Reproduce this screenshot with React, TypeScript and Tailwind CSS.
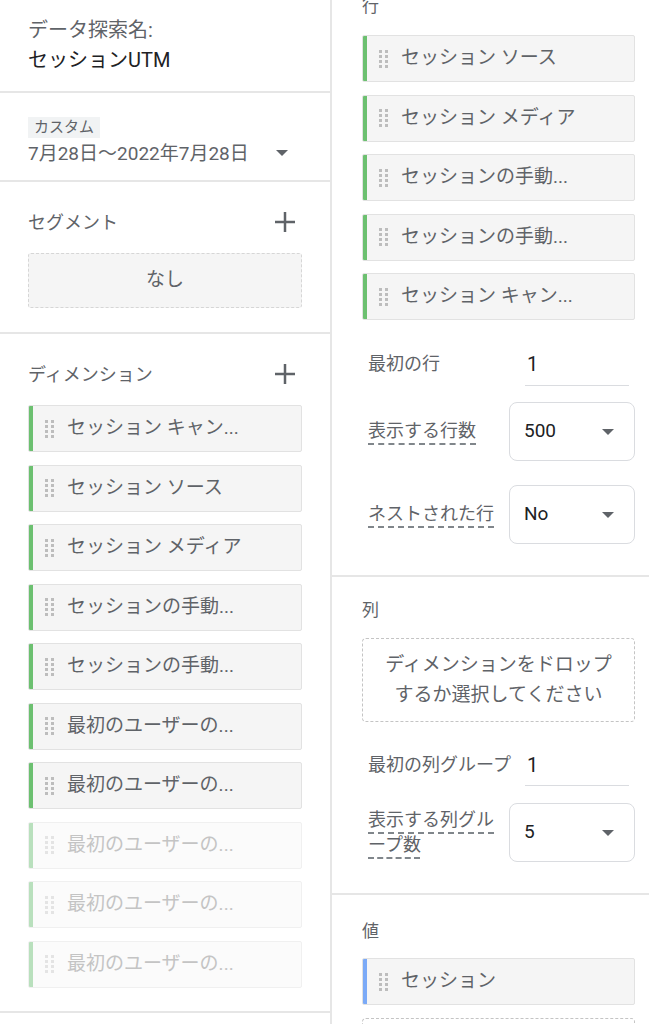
const font = { fontFamily: "Roboto, 'Noto Sans CJK JP', sans-serif" };

interface ChipProps {
  label: string;
  color?: "green" | "blue";
  faded?: boolean;
}

const Grip = ({ faded }: { faded?: boolean }) => (
  <div className="grid grid-cols-2 gap-x-[3px] gap-y-[2px] mr-[13px]">
    {Array.from({ length: 8 }).map((_, i) => (
      <span
        key={i}
        className={`w-[3px] h-[3px] ${faded ? "bg-[#e4e4e4]" : "bg-[#bdbdbd]"}`}
      />
    ))}
  </div>
);

const Chip = ({ label, color = "green", faded }: ChipProps) => {
  const bar = faded
    ? "bg-[#b9e0bd]"
    : color === "blue"
      ? "bg-[#7baaf7]"
      : "bg-[#6cc070]";
  return (
    <div
      className={`flex h-[47px] shrink-0 rounded-[2px] border overflow-hidden ${
        faded ? "border-[#f0f0f0] bg-[#fbfbfb]" : "border-[#e2e2e2] bg-[#f5f5f5]"
      }`}
    >
      <div className={`w-[4px] ${bar}`} />
      <div className="flex items-center pl-[12px]">
        <Grip faded={faded} />
        <span
          className={`text-[19px] whitespace-nowrap ${faded ? "text-[#c4c4c4]" : "text-[#5f6368]"}`}
        >
          {label}
        </span>
      </div>
    </div>
  );
};

const Plus = () => (
  <svg width="22" height="22" viewBox="0 0 22 22">
    <path d="M11 1v20M1 11h20" stroke="#5f6368" strokeWidth="2.5" />
  </svg>
);

const Caret = () => (
  <svg width="12" height="6" viewBox="0 0 12 6">
    <path d="M0 0h12L6 6z" fill="#5f6368" />
  </svg>
);

const Select = ({ value }: { value: string }) => (
  <div className="w-[126px] h-[59px] shrink-0 border border-[#dadce0] rounded-[8px] flex items-center justify-between pl-[14px] pr-[20px]">
    <span className="text-[19px] text-[#202124]">{value}</span>
    <Caret />
  </div>
);

const Dotted = ({ children }: { children: React.ReactNode }) => (
  <span className="text-[18px] text-[#5f6368] leading-[23px] underline decoration-dashed decoration-[#80868b] underline-offset-[7px]">
    {children}
  </span>
);

export default function App() {
  const dims: ChipProps[] = [
    { label: "セッション キャン..." },
    { label: "セッション ソース" },
    { label: "セッション メディア" },
    { label: "セッションの手動..." },
    { label: "セッションの手動..." },
    { label: "最初のユーザーの..." },
    { label: "最初のユーザーの..." },
    { label: "最初のユーザーの...", faded: true },
    { label: "最初のユーザーの...", faded: true },
    { label: "最初のユーザーの...", faded: true },
  ];
  const rows = [
    "セッション ソース",
    "セッション メディア",
    "セッションの手動...",
    "セッションの手動...",
    "セッション キャン...",
  ];

  return (
    <div className="w-[649px] h-[1024px] overflow-hidden bg-white flex" style={font}>
      {/* left column */}
      <div className="w-[330px] shrink-0 flex flex-col">
        <div className="h-[93px] shrink-0 border-b-2 border-[#e6e6e6] px-[28px] pt-[15px]">
          <div className="text-[20px] leading-[30px] text-[#5f6368]">データ探索名:</div>
          <div className="text-[20px] leading-[30px] text-[#202124]">セッションUTM</div>
        </div>

        <div className="h-[89px] shrink-0 border-b-2 border-[#e6e6e6] px-[28px] pt-[22px]">
          <span className="inline-block bg-[#f1f3f4] text-[15px] leading-[21px] px-[6px] text-[#5f6368]">
            カスタム
          </span>
          <div className="flex items-center h-[32px] -mt-[1px]">
            <span className="text-[19px] text-[#5f6368] whitespace-nowrap">7月28日〜2022年7月28日</span>
            <span className="ml-[27px] mt-[-2px]">
              <Caret />
            </span>
          </div>
        </div>

        <div className="h-[152px] shrink-0 border-b-2 border-[#e6e6e6] px-[28px] pt-[28px]">
          <div className="flex items-center justify-between h-[24px] pr-[6px]">
            <span className="text-[18px] text-[#5f6368]">セグメント</span>
            <Plus />
          </div>
          <div className="mt-[19px] h-[55px] border border-dashed border-[#d6d6d6] rounded-[3px] bg-[#f5f5f5] flex items-center justify-center">
            <span className="text-[19px] text-[#5f6368]">なし</span>
          </div>
        </div>

        <div className="h-[679px] shrink-0 border-b-2 border-[#e6e6e6] px-[28px] pt-[28px]">
          <div className="flex items-center justify-between h-[24px] pr-[6px]">
            <span className="text-[18px] text-[#5f6368]">ディメンション</span>
            <Plus />
          </div>
          <div className="mt-[19px] flex flex-col gap-[12.5px]">
            {dims.map((d, i) => (
              <Chip key={i} {...d} />
            ))}
          </div>
        </div>
      </div>

      {/* divider */}
      <div className="w-[2px] shrink-0 bg-[#e6e6e6]" />

      {/* right column */}
      <div className="flex-1 flex flex-col">
        <div className="h-[583px] shrink-0 border-b-2 border-[#e6e6e6] pl-[30px] pr-[15px] -mt-[6px]">
          <div className="text-[17px] leading-[24px] text-[#5f6368]">行</div>
          <div className="mt-[17px] flex flex-col gap-[12.5px]">
            {rows.map((r, i) => (
              <Chip key={i} label={r} />
            ))}
          </div>
          <div className="flex items-start mt-[24px]">
            <div className="w-[163px] shrink-0 pl-[6px] pt-[8px] text-[18px] leading-[24px] text-[#5f6368]">最初の行</div>
            <div className="w-[104px] h-[42px] border-b border-[#dadce0] pt-[8px] text-[20px] leading-[24px] text-[#202124] pl-[2px]">
              1
            </div>
          </div>
          <div className="flex items-center mt-[16px]">
            <div className="w-[147px] pl-[6px] shrink-0">
              <Dotted>表示する行数</Dotted>
            </div>
            <Select value="500" />
          </div>
          <div className="flex items-center mt-[24px]">
            <div className="w-[147px] pl-[6px] shrink-0">
              <Dotted>ネストされた行</Dotted>
            </div>
            <Select value="No" />
          </div>
        </div>

        <div className="h-[318px] shrink-0 border-b-2 border-[#e6e6e6] pl-[30px] pr-[15px] pt-[21px]">
          <div className="text-[17px] leading-[24px] text-[#5f6368]">列</div>
          <div className="mt-[16px] h-[84px] border border-dashed border-[#c4c4c4] rounded-[4px] flex items-center justify-center text-center">
            <span className="text-[19px] leading-[30px] text-[#5f6368]">
              ディメンションをドロップ
              <br />
              するか選択してください
            </span>
          </div>
          <div className="flex items-start mt-[22px]">
            <div className="w-[163px] shrink-0 pl-[6px] pt-[9px] text-[18px] leading-[24px] text-[#5f6368] whitespace-nowrap">
              最初の列グループ
            </div>
            <div className="w-[104px] h-[42px] border-b border-[#dadce0] pt-[9px] text-[20px] leading-[24px] text-[#202124] pl-[2px]">
              1
            </div>
          </div>
          <div className="flex items-center mt-[17px]">
            <div className="w-[147px] pl-[6px] pr-[12px] shrink-0">
              <Dotted>表示する列グループ数</Dotted>
            </div>
            <Select value="5" />
          </div>
        </div>

        <div className="flex-1 pl-[30px] pr-[15px] pt-[24px]">
          <div className="text-[17px] leading-[24px] text-[#5f6368]">値</div>
          <div className="mt-[15px]">
            <Chip label="セッション" color="blue" />
          </div>
          <div className="mt-[13px] h-[60px] border border-dashed border-[#c4c4c4] rounded-[4px]" />
        </div>
      </div>
    </div>
  );
}
